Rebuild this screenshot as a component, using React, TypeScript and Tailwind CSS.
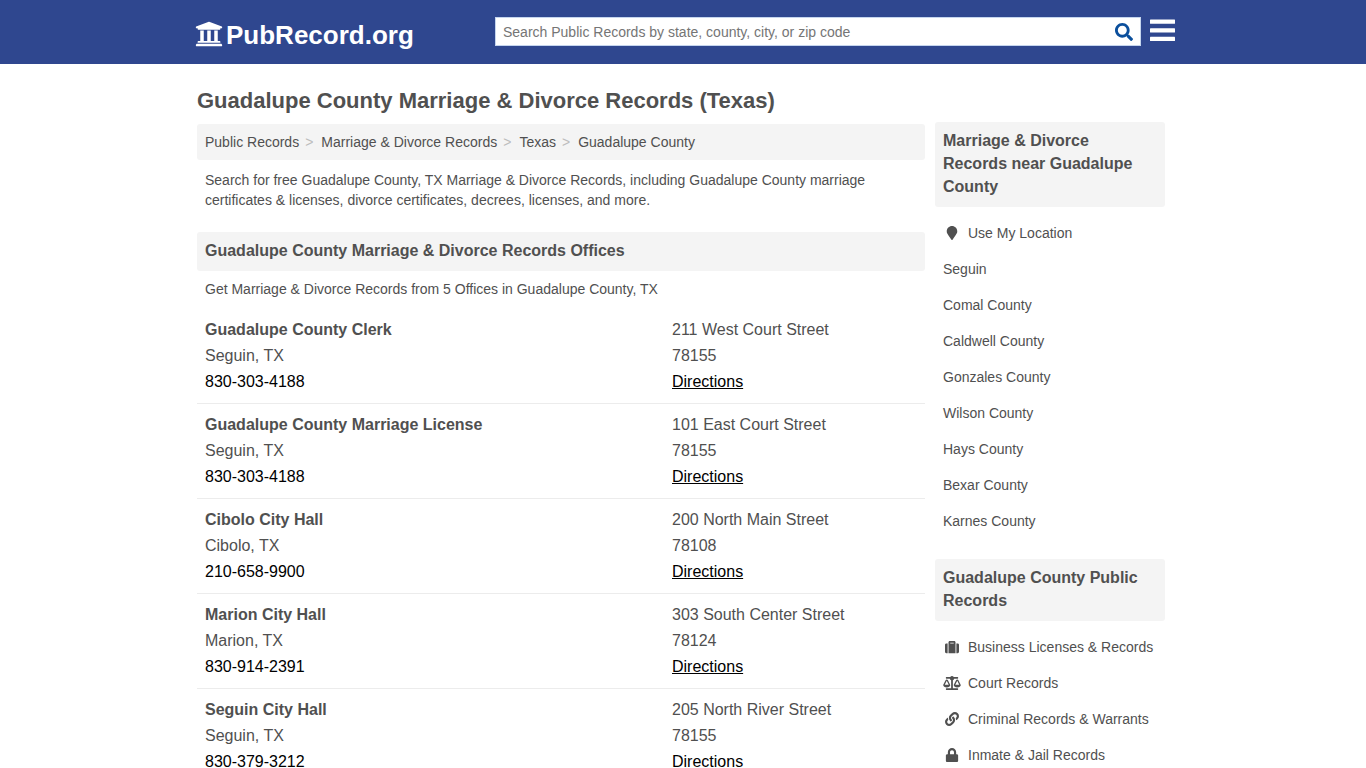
import React from 'react';
import {
  FaBalanceScale,
  FaLink,
  FaLock,
  FaMapMarker,
  FaSearch,
  FaSuitcase,
  FaUniversity,
} from 'react-icons/fa';

interface Office {
  name: string;
  city: string;
  phone: string;
  street: string;
  zip: string;
}

interface SideLink {
  label: string;
  icon?: React.ReactNode;
}

const offices: Office[] = [
  { name: 'Guadalupe County Clerk', city: 'Seguin, TX', phone: '830-303-4188', street: '211 West Court Street', zip: '78155' },
  { name: 'Guadalupe County Marriage License', city: 'Seguin, TX', phone: '830-303-4188', street: '101 East Court Street', zip: '78155' },
  { name: 'Cibolo City Hall', city: 'Cibolo, TX', phone: '210-658-9900', street: '200 North Main Street', zip: '78108' },
  { name: 'Marion City Hall', city: 'Marion, TX', phone: '830-914-2391', street: '303 South Center Street', zip: '78124' },
  { name: 'Seguin City Hall', city: 'Seguin, TX', phone: '830-379-3212', street: '205 North River Street', zip: '78155' },
];

const breadcrumbs = ['Public Records', 'Marriage & Divorce Records', 'Texas', 'Guadalupe County'];

const nearby: SideLink[] = [
  { label: 'Use My Location', icon: <FaMapMarker size={14} /> },
  { label: 'Seguin' },
  { label: 'Comal County' },
  { label: 'Caldwell County' },
  { label: 'Gonzales County' },
  { label: 'Wilson County' },
  { label: 'Hays County' },
  { label: 'Bexar County' },
  { label: 'Karnes County' },
];

const publicRecords: SideLink[] = [
  { label: 'Business Licenses & Records', icon: <FaSuitcase size={14} /> },
  { label: 'Court Records', icon: <FaBalanceScale size={14} className="w-[18px]" /> },
  { label: 'Criminal Records & Warrants', icon: <FaLink size={14} /> },
  { label: 'Inmate & Jail Records', icon: <FaLock size={14} /> },
];

const Header: React.FC = () => (
  <header className="bg-[#2f478f]">
    <div className="mx-auto flex h-16 max-w-[984px] items-start pl-1">
      <a href="#" className="flex items-start gap-[3px] pt-[17px] text-white">
        <FaUniversity size={28} className="mt-[3px]" />
        <span className="text-[26px] leading-9 font-bold">PubRecord.org</span>
      </a>
      <form className="mt-[17px] mr-[9px] ml-auto flex h-[29px] w-[646px] border border-[#c5d5ee] bg-white">
        <input
          type="text"
          aria-label="Search Public Records"
          placeholder="Search Public Records by state, county, city, or zip code"
          className="min-w-0 flex-1 px-[7px] text-sm text-[#505050] outline-none placeholder:text-[#757575]"
        />
        <button type="submit" aria-label="Search" className="px-[7px] text-[#0b4f9c]">
          <FaSearch size={18} />
        </button>
      </form>
      <button type="button" aria-label="Menu" className="mt-[19px] text-white">
        <svg width="25" height="22" viewBox="0 0 25 22" fill="currentColor">
          <rect y="0.5" width="25" height="4.2" rx="0.5" />
          <rect y="9.2" width="25" height="4.2" rx="0.5" />
          <rect y="17.8" width="25" height="4.2" rx="0.5" />
        </svg>
      </button>
    </div>
  </header>
);

const OfficeRow: React.FC<{ office: Office }> = ({ office }) => (
  <li className="flex border-b border-[#ececec] px-2 py-2 text-base leading-[26px]">
    <div className="flex-1">
      <h3 className="font-bold">{office.name}</h3>
      <p>{office.city}</p>
      <a href="#" className="block text-black">{office.phone}</a>
    </div>
    <div className="w-[245px]">
      <p>{office.street}</p>
      <p>{office.zip}</p>
      <a href="#" className="text-black underline">Directions</a>
    </div>
  </li>
);

const SideSection: React.FC<{ title: string; links: SideLink[] }> = ({ title, links }) => (
  <section className="mb-5">
    <h2 className="rounded-[3px] bg-[#f4f4f4] px-2 pt-[7px] pb-[9px] text-base leading-[23px] font-bold">{title}</h2>
    <ul className="pt-2">
      {links.map((link) => (
        <li key={link.label}>
          <a href="#" className="flex h-9 items-center gap-[7px] px-2 text-sm">
            {link.icon && <span className="flex w-[18px] justify-center">{link.icon}</span>}
            {link.label}
          </a>
        </li>
      ))}
    </ul>
  </section>
);

const App: React.FC = () => {
  return (
    <div className="bg-white font-['Liberation_Sans',Arial,sans-serif] text-[#505050]">
      <Header />
      <div className="mx-auto flex max-w-[984px] items-start gap-[10px] pr-[10px] pl-[6px]">
        <main className="min-w-0 flex-1 pt-[23px]">
          <h1 className="text-[22px] leading-7 font-bold">Guadalupe County Marriage &amp; Divorce Records (Texas)</h1>

          {/* Breadcrumbs */}
          <nav className="mt-[9px] rounded-[3px] bg-[#f4f4f4] px-2">
            <ol className="flex h-9 items-center gap-2 text-sm">
              {breadcrumbs.map((crumb, i) => (
                <li key={crumb} className="flex gap-[6px]">
                  <a href="#">{crumb}</a>
                  {i < breadcrumbs.length - 1 && <span className="text-[#bdbdbd]">&gt;</span>}
                </li>
              ))}
            </ol>
          </nav>

          <p className="px-2 pt-[10px] pb-[22px] text-sm leading-5">
            Search for free Guadalupe County, TX Marriage &amp; Divorce Records, including Guadalupe County marriage
            certificates &amp; licenses, divorce certificates, decrees, licenses, and more.
          </p>

          {/* Offices */}
          <h2 className="rounded-[3px] bg-[#f4f4f4] px-2 pt-[7px] pb-[9px] text-base leading-[23px] font-bold">
            Guadalupe County Marriage &amp; Divorce Records Offices
          </h2>
          <p className="px-2 pt-2 pb-[10px] text-sm leading-5">
            Get Marriage &amp; Divorce Records from 5 Offices in Guadalupe County, TX
          </p>
          <ul>
            {offices.map((office) => (
              <OfficeRow key={office.name} office={office} />
            ))}
          </ul>
        </main>

        <aside className="w-[230px] pt-[58px]">
          <SideSection title="Marriage & Divorce Records near Guadalupe County" links={nearby} />
          <SideSection title="Guadalupe County Public Records" links={publicRecords} />
        </aside>
      </div>
    </div>
  );
};

export default App;
